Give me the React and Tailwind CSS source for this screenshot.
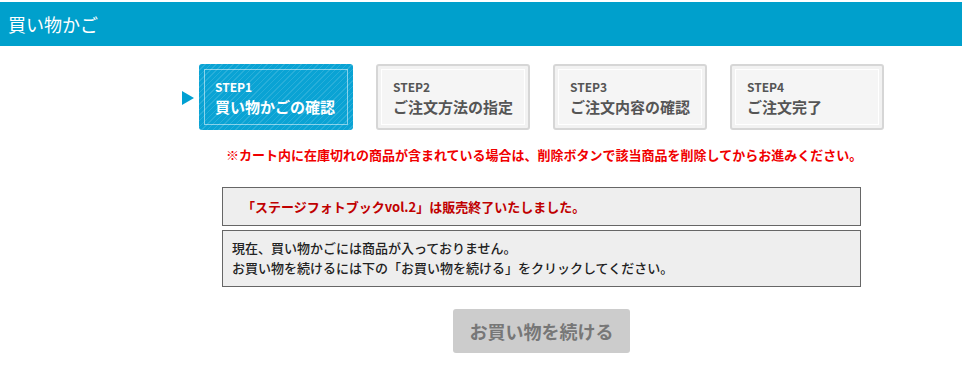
const steps = [
  { no: 'STEP1', label: '買い物かごの確認', active: true },
  { no: 'STEP2', label: 'ご注文方法の指定' },
  { no: 'STEP3', label: 'ご注文内容の確認' },
  { no: 'STEP4', label: 'ご注文完了' },
];

const font = { fontFamily: '"Noto Sans CJK JP", "Noto Sans", sans-serif' };

const App = () => {
  return (
    <div className="w-[962px] h-[368px] bg-white overflow-hidden pt-[2px]" style={font}>
      {/* Header */}
      <div className="h-[44px] bg-[#00a0cc] flex items-center px-[8px]">
        <h1 className="text-white text-[18px] leading-none">買い物かご</h1>
      </div>

      {/* Steps */}
      <div className="flex items-center pl-[182px] mt-[18px]">
        <div className="w-0 h-0 border-y-[7px] border-y-transparent border-l-[12px] border-l-[#00a0d2] mr-[5px] mt-[1px]"></div>
        <div className="flex gap-[23px]">
          {steps.map((s) =>
            s.active ? (
              <div
                key={s.no}
                className="w-[154px] h-[66px] rounded-[3px] bg-[#0aa3d4] p-[5px]"
                style={{ backgroundImage: 'repeating-linear-gradient(135deg, rgba(255,255,255,0.12) 0 1px, transparent 1px 4px)' }}
              >
                <div className="h-full border border-white/50 pl-[10px] pt-[9px] whitespace-nowrap">
                  <div className="text-white font-bold text-[12px] leading-[16px]">{s.no}</div>
                  <div className="text-white font-bold text-[15px] leading-[24px]">{s.label}</div>
                </div>
              </div>
            ) : (
              <div key={s.no} className="w-[154px] h-[66px] rounded-[3px] bg-[#f2f2f2] border-2 border-[#d6d6d6] p-[3px]">
                <div className="h-full bg-[#f5f5f5] border border-white pl-[11px] pt-[9px] whitespace-nowrap">
                  <div className="text-[#555] font-bold text-[12px] leading-[16px]">{s.no}</div>
                  <div className="text-[#555] font-bold text-[15px] leading-[24px]">{s.label}</div>
                </div>
              </div>
            )
          )}
        </div>
      </div>

      {/* Notice */}
      <p className="ml-[226px] mt-[15px] text-[13px] leading-[20px] font-bold text-[#f00000]">
        ※カート内に在庫切れの商品が含まれている場合は、削除ボタンで該当商品を削除してからお進みください。
      </p>

      {/* Messages */}
      <div className="ml-[222px] w-[639px] mt-[22px] flex flex-col gap-[4px]">
        <div className="h-[39px] bg-[#eeeeee] border border-[#666] flex items-center pl-[19px]">
          <span className="text-[13px] font-bold text-[#c00000]">「ステージフォトブックvol.2」は販売終了いたしました。</span>
        </div>
        <div className="h-[57px] bg-[#eeeeee] border border-[#666] pl-[9px] pt-[7px] text-[13px] leading-[20px] font-medium text-[#222]">
          <p>現在、買い物かごには商品が入っておりません。</p>
          <p>お買い物を続けるには下の「お買い物を続ける」をクリックしてください。</p>
        </div>
      </div>

      {/* Button */}
      <div className="ml-[453px] mt-[22px]">
        <button className="w-[177px] h-[44px] rounded-[3px] bg-[#cccccc] text-[#777] font-bold text-[18px]">
          お買い物を続ける
        </button>
      </div>
    </div>
  );
};

export default App;
